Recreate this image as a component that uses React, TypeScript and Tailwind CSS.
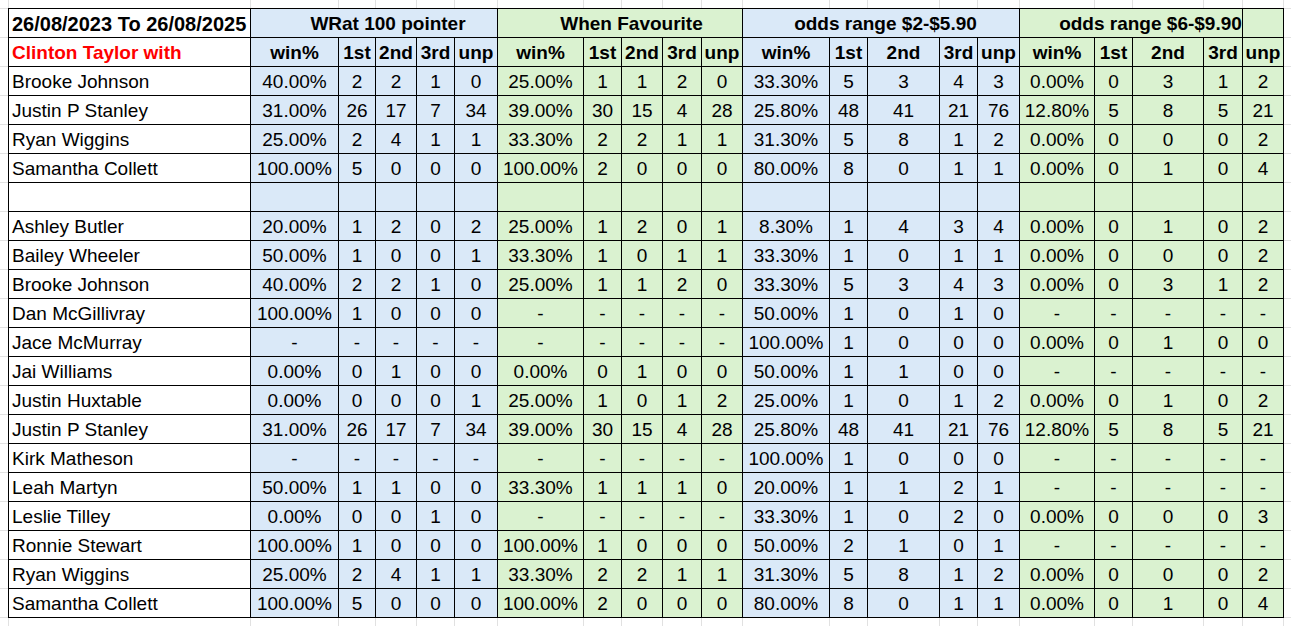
import React from "react";

type Row = { name: string; vals: string[] } | null;

const blue = "bg-[#dae9f8]";
const green = "bg-[#daf2d0]";
const ring = "shadow-[0_0_0_1px_#000]";

const S = (s: string) => s.split(" ");
const dash = S("- - - - -");

const rows: Row[] = [
  { name: "Brooke Johnson", vals: [...S("40.00% 2 2 1 0"), ...S("25.00% 1 1 2 0"), ...S("33.30% 5 3 4 3"), ...S("0.00% 0 3 1 2")] },
  { name: "Justin P Stanley", vals: [...S("31.00% 26 17 7 34"), ...S("39.00% 30 15 4 28"), ...S("25.80% 48 41 21 76"), ...S("12.80% 5 8 5 21")] },
  { name: "Ryan Wiggins", vals: [...S("25.00% 2 4 1 1"), ...S("33.30% 2 2 1 1"), ...S("31.30% 5 8 1 2"), ...S("0.00% 0 0 0 2")] },
  { name: "Samantha Collett", vals: [...S("100.00% 5 0 0 0"), ...S("100.00% 2 0 0 0"), ...S("80.00% 8 0 1 1"), ...S("0.00% 0 1 0 4")] },
  null,
  { name: "Ashley Butler", vals: [...S("20.00% 1 2 0 2"), ...S("25.00% 1 2 0 1"), ...S("8.30% 1 4 3 4"), ...S("0.00% 0 1 0 2")] },
  { name: "Bailey Wheeler", vals: [...S("50.00% 1 0 0 1"), ...S("33.30% 1 0 1 1"), ...S("33.30% 1 0 1 1"), ...S("0.00% 0 0 0 2")] },
  { name: "Brooke Johnson", vals: [...S("40.00% 2 2 1 0"), ...S("25.00% 1 1 2 0"), ...S("33.30% 5 3 4 3"), ...S("0.00% 0 3 1 2")] },
  { name: "Dan McGillivray", vals: [...S("100.00% 1 0 0 0"), ...dash, ...S("50.00% 1 0 1 0"), ...dash] },
  { name: "Jace McMurray", vals: [...dash, ...dash, ...S("100.00% 1 0 0 0"), ...S("0.00% 0 1 0 0")] },
  { name: "Jai Williams", vals: [...S("0.00% 0 1 0 0"), ...S("0.00% 0 1 0 0"), ...S("50.00% 1 1 0 0"), ...dash] },
  { name: "Justin Huxtable", vals: [...S("0.00% 0 0 0 1"), ...S("25.00% 1 0 1 2"), ...S("25.00% 1 0 1 2"), ...S("0.00% 0 1 0 2")] },
  { name: "Justin P Stanley", vals: [...S("31.00% 26 17 7 34"), ...S("39.00% 30 15 4 28"), ...S("25.80% 48 41 21 76"), ...S("12.80% 5 8 5 21")] },
  { name: "Kirk Matheson", vals: [...dash, ...dash, ...S("100.00% 1 0 0 0"), ...dash] },
  { name: "Leah Martyn", vals: [...S("50.00% 1 1 0 0"), ...S("33.30% 1 1 1 0"), ...S("20.00% 1 1 2 1"), ...dash] },
  { name: "Leslie Tilley", vals: [...S("0.00% 0 0 1 0"), ...dash, ...S("33.30% 1 0 2 0"), ...S("0.00% 0 0 0 3")] },
  { name: "Ronnie Stewart", vals: [...S("100.00% 1 0 0 0"), ...S("100.00% 1 0 0 0"), ...S("50.00% 2 1 0 1"), ...dash] },
  { name: "Ryan Wiggins", vals: [...S("25.00% 2 4 1 1"), ...S("33.30% 2 2 1 1"), ...S("31.30% 5 8 1 2"), ...S("0.00% 0 0 0 2")] },
  { name: "Samantha Collett", vals: [...S("100.00% 5 0 0 0"), ...S("100.00% 2 0 0 0"), ...S("80.00% 8 0 1 1"), ...S("0.00% 0 1 0 4")] },
];

const sub = ["win%", "1st", "2nd", "3rd", "unp"];

function bgFor(i: number) {
  return Math.floor(i / 5) % 2 === 0 ? blue : green;
}

function Margin() {
  return <div className="bg-white" />;
}

function MarginRow() {
  return (
    <>
      {Array.from({ length: 23 }).map((_, i) => (
        <Margin key={i} />
      ))}
    </>
  );
}

export default function App() {
  return (
    <div className="w-[1291px] h-[626px] overflow-hidden bg-white font-['Liberation_Sans',Arial,sans-serif] text-[19px] text-black">
      <div className="grid h-full gap-px bg-[#e1e1e1] grid-cols-[8px_241px_87px_36px_40px_37px_42px_85px_37px_40px_38px_40px_86px_37px_71px_37px_41px_74px_37px_70px_38px_40px_1fr] grid-rows-[8px_repeat(21,28px)_1fr]">
        <MarginRow />

        {/* header row 1 */}
        <Margin />
        <div className={`${ring} bg-white pl-[3px] pt-[2px] leading-[26px] text-[20px] font-bold whitespace-nowrap`}>
          26/08/2023 To 26/08/2025
        </div>
        <div className={`${ring} ${blue} col-span-5 pl-[28px] pt-[2px] leading-[26px] text-center font-bold whitespace-nowrap`}>
          WRat 100 pointer
        </div>
        <div className={`${ring} ${green} col-span-5 pl-[23px] pt-[2px] leading-[26px] text-center font-bold whitespace-nowrap`}>
          When Favourite
        </div>
        <div className={`${ring} ${blue} col-span-5 pl-[9px] pt-[2px] leading-[26px] text-center font-bold whitespace-nowrap`}>
          odds range $2-$5.90
        </div>
        <div className={`${ring} ${green} col-span-4 pl-[39px] pt-[2px] leading-[26px] text-center font-bold whitespace-nowrap`}>
          odds range $6-$9.90
        </div>
        <div className={`${ring} ${green}`} />
        <Margin />

        {/* header row 2 */}
        <Margin />
        <div className={`${ring} bg-white pl-[3px] pt-[2px] leading-[26px] font-bold text-[#ff0000] whitespace-nowrap`}>
          Clinton Taylor with
        </div>
        {Array.from({ length: 20 }).map((_, i) => (
          <div key={i} className={`${ring} ${bgFor(i)} pt-[2px] leading-[26px] text-center font-bold whitespace-nowrap`}>
            {sub[i % 5]}
          </div>
        ))}
        <Margin />

        {rows.map((r, ri) => (
          <React.Fragment key={ri}>
            <Margin />
            <div className={`${ring} bg-white pl-[3px] pt-[2px] leading-[26px] whitespace-nowrap overflow-hidden`}>
              {r ? r.name : ""}
            </div>
            {Array.from({ length: 20 }).map((_, i) => (
              <div key={i} className={`${ring} ${bgFor(i)} pt-[2px] leading-[26px] text-center whitespace-nowrap`}>
                {r ? r.vals[i] : ""}
              </div>
            ))}
            <Margin />
          </React.Fragment>
        ))}

        <MarginRow />
      </div>
    </div>
  );
}
